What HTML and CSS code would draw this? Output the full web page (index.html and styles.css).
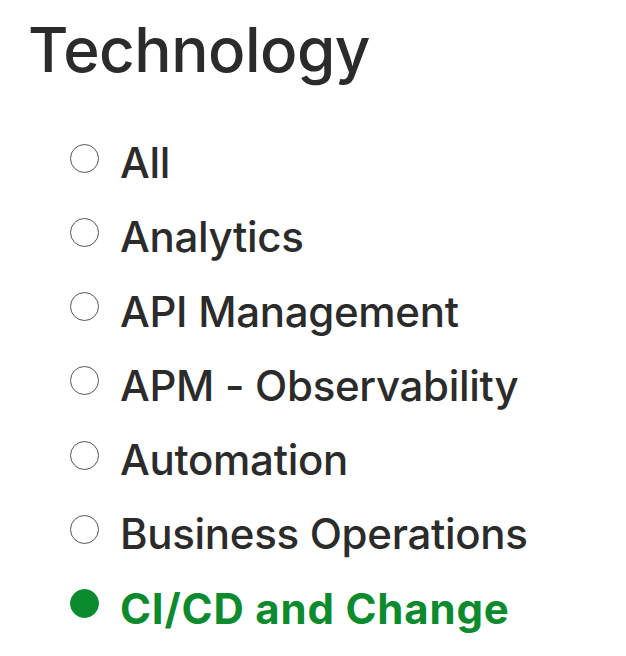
FILE: index.html
```html
<!DOCTYPE html>
<html>
<head>
<meta charset="utf-8">
<link rel="stylesheet" href="styles.css">
</head>
<body>
<section class="filter">
  <h2 class="title">Technology</h2>
  <ul class="options">
    <li class="option"><span class="radio"></span><span class="label">All</span></li>
    <li class="option"><span class="radio"></span><span class="label">Analytics</span></li>
    <li class="option"><span class="radio"></span><span class="label">API Management</span></li>
    <li class="option"><span class="radio"></span><span class="label">APM - Observability</span></li>
    <li class="option"><span class="radio"></span><span class="label">Automation</span></li>
    <li class="option"><span class="radio"></span><span class="label">Business Operations</span></li>
    <li class="option selected"><span class="radio"></span><span class="label">CI/CD and Change</span></li>
  </ul>
</section>
</body>
</html>
```
FILE: styles.css
```css
html, body {
  margin: 0;
  padding: 0;
  background: #ffffff;
}
body {
  font-family: "Inter", "Liberation Sans", sans-serif;
  color: #2b2b2b;
}
.filter {
  padding: 14px 0 0 28px;
}
.title {
  margin: 0;
  font-size: 62px;
  font-weight: 500;
  line-height: 72px;
  letter-spacing: -0.5px;
}
.options {
  list-style: none;
  margin: 52px 0 0 0;
  padding: 0 0 0 42px;
  display: flex;
  flex-direction: column;
  gap: 24.3px;
}
.option {
  display: flex;
  align-items: center;
  gap: 21px;
  height: 50px;
}
.radio {
  width: 27px;
  height: 27px;
  border: 1.2px solid #555555;
  border-radius: 50%;
  flex: none;
  margin-top: -10px;
}
.label {
  font-size: 42px;
  font-weight: 500;
  line-height: 50px;
  letter-spacing: -0.3px;
}
.selected .radio {
  background: #0b8a2e;
  border-color: #0b8a2e;
}
.selected .label {
  color: #0b8a2e;
  font-weight: 700;
  letter-spacing: 0.8px;
}
```
